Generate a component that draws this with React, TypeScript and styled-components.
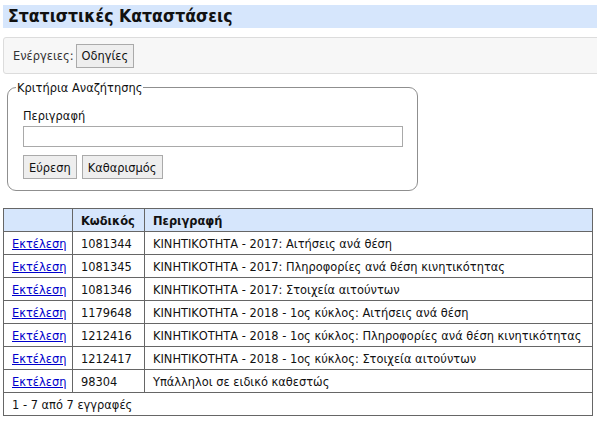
import styled, { createGlobalStyle } from 'styled-components';

const GlobalStyle = createGlobalStyle`
    html, body {
        margin: 0;
        padding: 0;
        overflow: hidden;
        background: white;
    }
    body {
        font-family: "DejaVu Sans Condensed", "Liberation Sans", sans-serif;
        font-size: 12.7px;
        color: #000;
    }
`

const rows = [
    { code: "1081344", desc: "ΚΙΝΗΤΙΚΟΤΗΤΑ - 2017: Αιτήσεις ανά θέση" },
    { code: "1081345", desc: "ΚΙΝΗΤΙΚΟΤΗΤΑ - 2017: Πληροφορίες ανά θέση κινητικότητας" },
    { code: "1081346", desc: "ΚΙΝΗΤΙΚΟΤΗΤΑ - 2017: Στοιχεία αιτούντων" },
    { code: "1179648", desc: "ΚΙΝΗΤΙΚΟΤΗΤΑ - 2018 - 1ος κύκλος: Αιτήσεις ανά θέση" },
    { code: "1212416", desc: "ΚΙΝΗΤΙΚΟΤΗΤΑ - 2018 - 1ος κύκλος: Πληροφορίες ανά θέση κινητικότητας" },
    { code: "1212417", desc: "ΚΙΝΗΤΙΚΟΤΗΤΑ - 2018 - 1ος κύκλος: Στοιχεία αιτούντων" },
    { code: "98304", desc: "Υπάλληλοι σε ειδικό καθεστώς" },
]

const App = () => {
    return <Page>
        <GlobalStyle />
        <Title>Στατιστικές Καταστάσεις</Title>

        <Actions>
            <span>Ενέργειες:</span>
            <Button>Οδηγίες</Button>
        </Actions>

        <Criteria>
            <Legend>Κριτήρια Αναζήτησης</Legend>
            <Label htmlFor="descr">Περιγραφή</Label>
            <Input id="descr" type="text" />
            <ButtonRow>
                <Button>Εύρεση</Button>
                <Button>Καθαρισμός</Button>
            </ButtonRow>
        </Criteria>

        <Table>
            <colgroup>
                <col style={{ width: 69 }} />
                <col style={{ width: 72 }} />
                <col />
            </colgroup>
            <thead>
                <tr>
                    <Th></Th>
                    <Th>Κωδικός</Th>
                    <Th>Περιγραφή</Th>
                </tr>
            </thead>
            <tbody>
                {rows.map((r) => (
                    <tr key={r.code}>
                        <Td><RunLink href="#">Εκτέλεση</RunLink></Td>
                        <Td>{r.code}</Td>
                        <Td>{r.desc}</Td>
                    </tr>
                ))}
            </tbody>
            <tfoot>
                <tr>
                    <Td colSpan={3}>1 - 7 από 7 εγγραφές</Td>
                </tr>
            </tfoot>
        </Table>
    </Page>;
}

export default App;

const Page = styled.div`
    padding: 5px 0 0 3px;
    width: 594px;
`

const Title = styled.div`
    height: 23px;
    line-height: 23px;
    background-color: #d6e6fc;
    padding-left: 5px;
    font-size: 17.5px;
    font-weight: bold;
    color: #111;
`

const Actions = styled.div`
    margin-top: 9px;
    margin-right: -6px;
    height: 35px;
    border: 1px solid #dcdcdc;
    border-radius: 3px;
    background-color: #f7f7f7;
    display: flex;
    align-items: center;
    gap: 2px;
    padding-left: 9px;
    color: #333;
`

const Button = styled.button`
    font-family: inherit;
    font-size: 12.7px;
    color: #111;
    height: 24px;
    padding: 0 5px;
    background-color: #eeeeee;
    border: 1px solid #aaa;
    border-radius: 0;
`

const Criteria = styled.fieldset`
    margin: 6px 0 0 4px;
    width: 410px;
    box-sizing: border-box;
    border: 1px solid #8f8f8f;
    border-radius: 9px;
    padding: 8px 14px 11px 15px;
    display: flex;
    flex-direction: column;
`

const Legend = styled.legend`
    padding: 0 1px;
    margin-left: -7px;
    color: #111;
`

const Label = styled.label`
    display: block;
    margin-top: 5px;
    color: #111;
`

const Input = styled.input`
    margin-top: 3px;
    height: 21px;
    box-sizing: border-box;
    border: 1px solid #a9a9a9;
    width: 380px;
`

const ButtonRow = styled.div`
    display: flex;
    gap: 5px;
    margin-top: 8px;
`

const Table = styled.table`
    margin-top: 17px;
    width: 590px;
    border-collapse: collapse;
    table-layout: fixed;
    border: 1px solid #666;
`

const Th = styled.th`
    height: 22px;
    padding: 0 8px;
    text-align: left;
    background-color: #d6e6fc;
    border: 1px solid #666;
    font-weight: bold;
    color: #111;
`

const Td = styled.td`
    height: 22px;
    padding: 0 8px;
    border: 1px solid #666;
    white-space: nowrap;
    color: #111;
`

const RunLink = styled.a`
    color: #0000cc;
    text-decoration: underline;
`
